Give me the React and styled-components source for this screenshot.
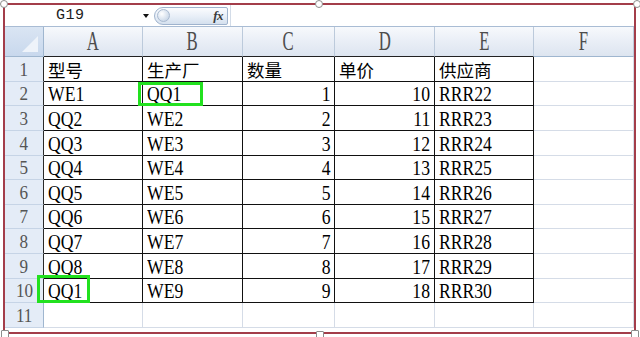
import React from "react";
import styled, { createGlobalStyle } from "styled-components";

const GlobalStyle = createGlobalStyle`
  html, body {
    margin: 0;
    padding: 0;
    background: #ffffff;
  }
  * {
    box-sizing: border-box;
  }
`;

const Page = styled.div`
  position: relative;
  width: 640px;
  height: 337px;
  padding: 5px 6px 0 5px;
  overflow: hidden;
  background: #ffffff;
`;

const Frame = styled.div`
  position: absolute;
  left: 3px;
  top: 3px;
  width: 633px;
  height: 331px;
  border: 2px solid #a33d4a;
  pointer-events: none;
`;

const Handle = styled.div`
  position: absolute;
  left: ${({ x }) => x - 4}px;
  top: ${({ y }) => y - 4}px;
  width: 8px;
  height: 8px;
  background: #ffffff;
  border: 1px solid #8d8d8d;
  border-radius: ${({ square }) => (square ? "1px" : "50%")};
`;

const FormulaBar = styled.div`
  display: flex;
  align-items: center;
  height: 22px;
  border-bottom: 1px solid #a9bcd4;
  background: #ffffff;
`;

const NameBox = styled.div`
  width: 138px;
  padding-left: 51px;
  font-family: "Liberation Mono", monospace;
  font-size: 15px;
  letter-spacing: 0.5px;
  color: #1c1c1c;
`;

const DropArrow = styled.div`
  width: 0;
  height: 0;
  border-left: 3.5px solid transparent;
  border-right: 3.5px solid transparent;
  border-top: 4px solid #111;
  margin-top: 1px;
`;

const FxPill = styled.div`
  display: flex;
  align-items: center;
  justify-content: space-between;
  width: 74px;
  height: 18px;
  margin-left: 5px;
  padding: 0 4px 0 2px;
  border: 1px solid #9fb3cd;
  border-radius: 9px 2px 2px 9px;
  background: linear-gradient(#fbfcfe, #e7eef7 55%, #d5e0ee);
`;

const Knob = styled.div`
  width: 13px;
  height: 13px;
  border-radius: 50%;
  border: 1px solid #a9bad0;
  background: radial-gradient(circle at 35% 35%, #ffffff, #cfdbea 70%, #b6c7dd);
`;

const FxLabel = styled.span`
  font-family: "Liberation Serif", serif;
  font-style: italic;
  font-weight: bold;
  font-size: 13px;
  color: #3b3b3b;
  letter-spacing: -0.5px;
`;

const FormulaInput = styled.div`
  flex: 1;
  height: 100%;
  margin-left: 2px;
  border-left: 1px solid #d3dce8;
`;

const Sheet = styled.div`
  display: grid;
  grid-template-columns: 39px 99px 100px 92px 100px 99px 100px;
  grid-template-rows: 30px 25px 24px 25px 25px 24px 25px 24px 25px 25px 24px 25px;
`;

const Corner = styled.div`
  position: relative;
  background: linear-gradient(#dae5f3, #c8d8ed);
  border-right: 1px solid #9fb6cf;
  border-bottom: 1px solid #9fb6cf;

  &::after {
    content: "";
    position: absolute;
    right: 5px;
    bottom: 4px;
    width: 0;
    height: 0;
    border-left: 16px solid transparent;
    border-bottom: 16px solid #eef3fa;
  }
`;

const ColHead = styled.div`
  display: flex;
  align-items: center;
  justify-content: center;
  background: linear-gradient(#f7f9fc, #e9eef6 50%, #dde5f0);
  border-right: 1px solid #bccadb;
  border-bottom: 1px solid ${({ dark }) => (dark ? "#222" : "#9fb6cf")};
`;

const ColLabel = styled.span`
  display: inline-block;
  font-family: "Liberation Serif", serif;
  font-size: 27px;
  line-height: 27px;
  color: #4d4d4d;
  transform: scaleX(0.62);
`;

const RowHead = styled.div`
  display: flex;
  align-items: flex-end;
  justify-content: center;
  padding-bottom: 1px;
  background: #e4ecf7;
  border-right: 1px solid ${({ dark }) => (dark ? "#2a2a2a" : "#9fb6cf")};
  border-bottom: 1px solid #c6d4e6;
`;

const RowLabel = styled.span`
  display: inline-block;
  font-family: "Liberation Serif", serif;
  font-size: 19px;
  line-height: 21px;
  color: #555555;
  transform: scaleX(0.9);
`;

const Cell = styled.div`
  position: relative;
  display: flex;
  align-items: flex-end;
  justify-content: ${({ num }) => (num ? "flex-end" : "flex-start")};
  padding: ${({ num }) => (num ? "0 4px 0 0" : "0 0 0 4px")};
  border-right: 1px solid ${({ boxed }) => (boxed ? "#111" : "#d5dce7")};
  border-bottom: 1px solid ${({ boxed }) => (boxed ? "#111" : "#d5dce7")};
  background: #ffffff;
`;

const Latin = styled.span`
  display: inline-block;
  font-family: "Liberation Serif", serif;
  font-size: 21px;
  line-height: 21px;
  color: #000;
  white-space: nowrap;
  transform: scaleX(0.84);
  transform-origin: ${({ num }) => (num ? "right" : "left")} center;
`;

const Hanzi = styled.span`
  font-family: "Noto Sans CJK SC", sans-serif;
  font-size: 17.5px;
  line-height: 21px;
  padding-bottom: 1px;
  color: #000;
`;

const Highlight = styled.div`
  position: absolute;
  left: ${({ x }) => x}px;
  top: ${({ y }) => y}px;
  width: ${({ w }) => w}px;
  height: ${({ h }) => h}px;
  border: 3px solid #22e11f;
  pointer-events: none;
`;

const columns = ["A", "B", "C", "D", "E", "F"];

const header = ["型号", "生产厂", "数量", "单价", "供应商"];

const rows = [
  ["WE1", "QQ1", 1, 10, "RRR22"],
  ["QQ2", "WE2", 2, 11, "RRR23"],
  ["QQ3", "WE3", 3, 12, "RRR24"],
  ["QQ4", "WE4", 4, 13, "RRR25"],
  ["QQ5", "WE5", 5, 14, "RRR26"],
  ["QQ6", "WE6", 6, 15, "RRR27"],
  ["QQ7", "WE7", 7, 16, "RRR28"],
  ["QQ8", "WE8", 8, 17, "RRR29"],
  ["QQ1", "WE9", 9, 18, "RRR30"],
];

// green boxes drawn over cells: [row, col] -> box offsets
const marks = {
  "2-1": { x: -5, y: 0, w: 65, h: 24 },
  "10-0": { x: -7, y: -4, w: 53, h: 28 },
};

const App = () => {
  return (
    <>
      <GlobalStyle />
      <Page>
        <FormulaBar>
          <NameBox>G19</NameBox>
          <DropArrow />
          <FxPill>
            <Knob />
            <FxLabel>fx</FxLabel>
          </FxPill>
          <FormulaInput />
        </FormulaBar>

        <Sheet>
          <Corner />
          {columns.map((c, i) => (
            <ColHead key={c} dark={i < 5}>
              <ColLabel>{c}</ColLabel>
            </ColHead>
          ))}

          <RowHead dark>
            <RowLabel>1</RowLabel>
          </RowHead>
          {header.map((h) => (
            <Cell key={h} boxed>
              <Hanzi>{h}</Hanzi>
            </Cell>
          ))}
          <Cell />

          {rows.map((r, ri) => {
            const rowNo = ri + 2;
            return (
              <React.Fragment key={rowNo}>
                <RowHead dark>
                  <RowLabel>{rowNo}</RowLabel>
                </RowHead>
                {r.map((v, ci) => {
                  const num = typeof v === "number";
                  const mark = marks[`${rowNo}-${ci}`];
                  return (
                    <Cell key={ci} boxed num={num}>
                      <Latin num={num}>{v}</Latin>
                      {mark && <Highlight {...mark} />}
                    </Cell>
                  );
                })}
                <Cell />
              </React.Fragment>
            );
          })}

          <RowHead>
            <RowLabel>11</RowLabel>
          </RowHead>
          {columns.map((c) => (
            <Cell key={c} />
          ))}
        </Sheet>

        <Frame>
          <Handle x={-1} y={-1} />
          <Handle x={314} y={-1} />
          <Handle x={632} y={-1} />
          <Handle x={0} y={329} square />
          <Handle x={315} y={330} square />
          <Handle x={630} y={329} square />
        </Frame>
      </Page>
    </>
  );
};

export default App;
